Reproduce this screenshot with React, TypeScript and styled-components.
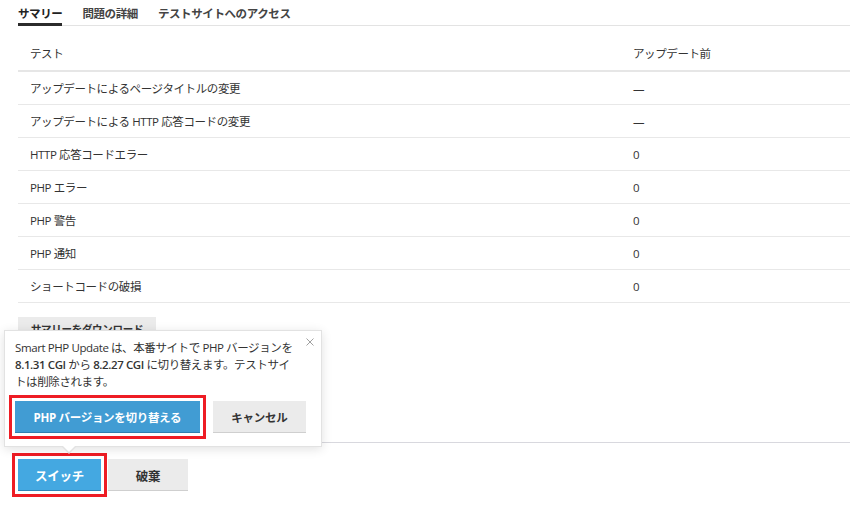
import styled, { createGlobalStyle, css } from "styled-components";

const GlobalStyle = createGlobalStyle`
  html, body {
    margin: 0;
    padding: 0;
    background: #ffffff;
  }
  body {
    font-family: "Open Sans", "Noto Sans CJK JP", sans-serif;
    font-size: 12px;
    color: #333333;
  }
`;

const rows: [string, string][] = [
  ["アップデートによるページタイトルの変更", "—"],
  ["アップデートによる HTTP 応答コードの変更", "—"],
  ["HTTP 応答コードエラー", "0"],
  ["PHP エラー", "0"],
  ["PHP 警告", "0"],
  ["PHP 通知", "0"],
  ["ショートコードの破損", "0"],
];

function App(): React.ReactElement {
  return (
    <>
      <GlobalStyle />
      <Page>
        <TabBar>
          <Tab $active>サマリー</Tab>
          <Tab>問題の詳細</Tab>
          <Tab>テストサイトへのアクセス</Tab>
        </TabBar>

        <Table>
          <HeaderRow>
            <Cell>テスト</Cell>
            <Cell>アップデート前</Cell>
          </HeaderRow>
          {rows.map(([name, value]) => (
            <Row key={name}>
              <Cell>{name}</Cell>
              <Cell>{value}</Cell>
            </Row>
          ))}
        </Table>

        <DownloadButton>サマリーをダウンロード</DownloadButton>

        <Footer>
          <ActionBar>
            <Popover>
              <CloseButton aria-label="閉じる">
                <svg width="8" height="8" viewBox="0 0 8 8">
                  <path d="M0.5 0.5 L7.5 7.5 M7.5 0.5 L0.5 7.5" stroke="#a0a0a0" strokeWidth="1" />
                </svg>
              </CloseButton>
              <PopoverText>
                Smart PHP Update は、本番サイトで PHP バージョンを <Strong>8.1.31 CGI</Strong> から{" "}
                <Strong>8.2.27 CGI</Strong> に切り替えます。テストサイトは削除されます。
              </PopoverText>
              <PopoverActions>
                <Button $variant="primary" $width={186} $highlight>
                  PHP バージョンを切り替える
                </Button>
                <Button $width={94}>キャンセル</Button>
              </PopoverActions>
            </Popover>
            <Button $variant="accent" $width={83} $highlight $large>
              スイッチ
            </Button>
            <Button $width={80} $large>
              破棄
            </Button>
          </ActionBar>
        </Footer>
      </Page>
    </>
  );
}

const Page = styled.div`
  padding: 5px 0 12px 18px;
`;

const TabBar = styled.div`
  display: flex;
  gap: 20px;
  border-bottom: 1px solid #e3e3e3;
`;

const Tab = styled.div<{ $active?: boolean }>`
  font-size: 11.5px;
  letter-spacing: -0.4px;
  font-weight: 600;
  line-height: 17px;
  padding-bottom: 1px;
  margin-bottom: -1px;
  color: #444444;
  border-bottom: 3px solid transparent;
  ${({ $active }) =>
    $active &&
    css`
      color: #222222;
      border-bottom-color: #2b2b2b;
    `}
`;

const Table = styled.div`
  margin-top: 10px;
`;

const Row = styled.div`
  display: grid;
  grid-template-columns: 603px 1fr;
  align-items: center;
  height: 32px;
  border-bottom: 1px solid #e8e8e8;
`;

const HeaderRow = styled(Row)`
  height: 34px;
  border-bottom: 2px solid #e6e6e6;
`;

const Cell = styled.div`
  padding-left: 12px;
  font-size: 11.5px;
  letter-spacing: -0.4px;
  color: #333333;
  white-space: nowrap;
`;

const DownloadButton = styled.button`
  display: block;
  margin-top: 14px;
  width: 138px;
  height: 22px;
  padding: 0;
  border: none;
  background: #ebebeb;
  font-family: inherit;
  font-size: 10.5px;
  letter-spacing: -0.3px;
  font-weight: 700;
  color: #333333;
`;

const Footer = styled.div`
  margin-top: 103px;
  padding-top: 16px;
  border-top: 1px solid #d8d8de;
`;

const ActionBar = styled.div`
  position: relative;
  display: flex;
  gap: 7px;
`;

const Popover = styled.div`
  position: absolute;
  left: -14px;
  bottom: calc(100% + 12px);
  width: 318px;
  box-sizing: border-box;
  padding: 8px 15px 13px 10px;
  background: #ffffff;
  border: 1px solid #e2e2e2;
  box-shadow: 0 2px 10px rgba(0, 0, 0, 0.12);
  z-index: 2;

  &::before,
  &::after {
    content: "";
    position: absolute;
    left: 57px;
    width: 0;
    height: 0;
    border-left: 7px solid transparent;
    border-right: 7px solid transparent;
  }
  &::before {
    bottom: -8px;
    border-top: 7px solid #e2e2e2;
  }
  &::after {
    bottom: -6px;
    border-top: 7px solid #ffffff;
  }
`;

const CloseButton = styled.button`
  position: absolute;
  top: 7px;
  right: 7px;
  padding: 0;
  border: none;
  background: none;
  line-height: 0;
`;

const PopoverText = styled.p`
  margin: 0 9px 0 0;
  font-size: 11.5px;
  letter-spacing: -0.4px;
  line-height: 17px;
  color: #333333;
`;

const Strong = styled.span`
  font-weight: 600;
`;

const PopoverActions = styled.div`
  display: flex;
  gap: 13px;
  margin-top: 11px;
`;

const Button = styled.button<{
  $variant?: "primary" | "accent" | "default";
  $width: number;
  $highlight?: boolean;
  $large?: boolean;
}>`
  width: ${({ $width }) => $width}px;
  height: 32px;
  padding: 0;
  border: none;
  font-family: inherit;
  font-size: ${({ $large }) => ($large ? 12.5 : 11.5)}px;
  letter-spacing: -0.3px;
  font-weight: 700;
  cursor: pointer;
  color: #333333;
  background: #ebebeb;
  box-shadow: inset 0 -1px 0 #cfcfcf;

  ${({ $variant }) =>
    $variant === "primary" &&
    css`
      color: #ffffff;
      background: #419cd3;
      box-shadow: inset 0 -1px 0 #2f7fb0;
    `}
  ${({ $variant }) =>
    $variant === "accent" &&
    css`
      color: #ffffff;
      background: #44a8e1;
      box-shadow: inset 0 -1px 0 #2f86b8;
    `}
  ${({ $highlight }) =>
    $highlight &&
    css`
      outline: 3px solid #ee1c24;
      outline-offset: 3px;
    `}
`;

export default App;
